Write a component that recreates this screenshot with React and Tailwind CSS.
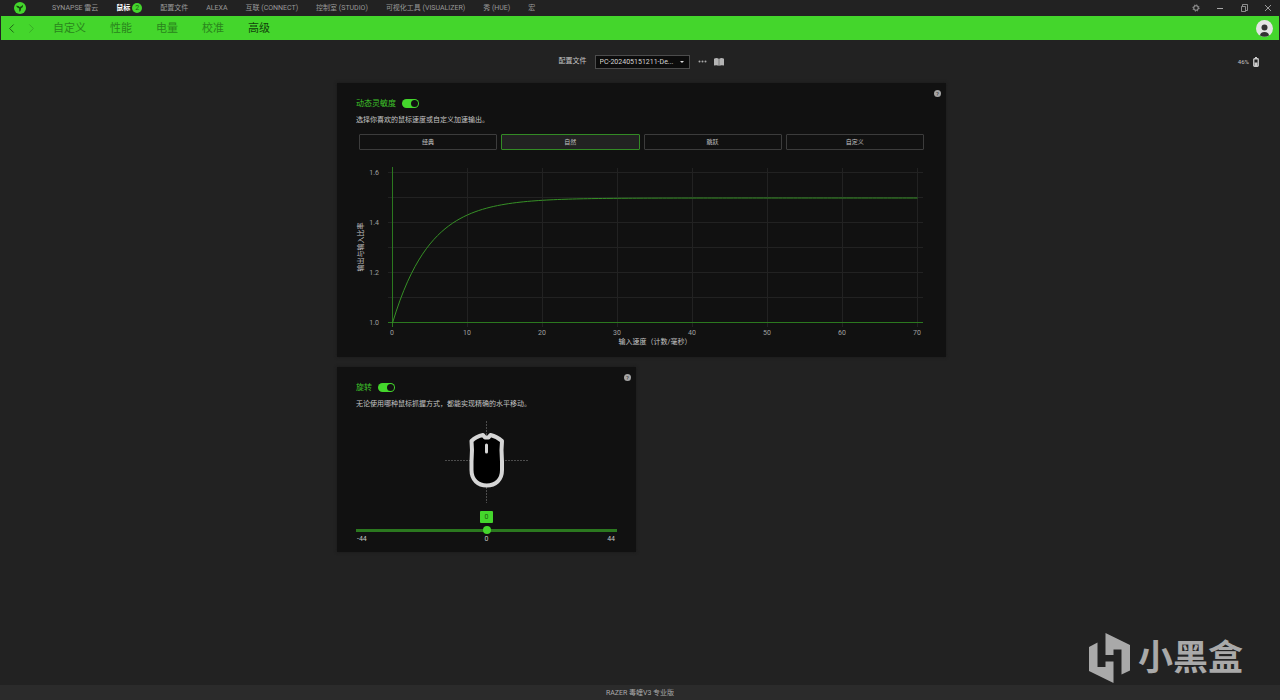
import React, { useState } from 'react';
import { ChevronLeft, ChevronRight } from 'lucide-react';

const MODULES = [
  { name: 'SYNAPSE 雷云' },
  { name: '鼠标', badge: 2 },
  { name: '配置文件' },
  { name: 'ALEXA' },
  { name: '互联 (CONNECT)' },
  { name: '控制室 (STUDIO)' },
  { name: '可视化工具 (VISUALIZER)' },
  { name: '秀 (HUE)' },
  { name: '宏' },
];

const TABS = ['自定义', '性能', '电量', '校准', '高级'];
const CURVES = ['经典', '自然', '跳跃', '自定义'];

// chart geometry
const X0 = 55;
const Y0 = 173;
const X_STEP = 75;
const Y_STEP = 25;

const curvePoints = Array.from({ length: 141 }, (_, i) => {
  const speed = i / 2;
  const ratio = 0.5 * (1 - Math.exp(-speed / 5));
  return `${X0 + 0.5 + speed * 7.5},${(Y0 - ratio * 250).toFixed(2)}`;
}).join(' ');

const Logo = () => (
  <svg viewBox="0 0 12 12" className="w-3 h-3" aria-hidden="true">
    <circle cx="6" cy="6" r="6" fill="#44d62c" />
    <path d="M2 3.8 Q4.4 3.4 5.6 5 Q7.4 4.6 9 2.8 Q9.6 5 7 6.6 Q7.2 8.6 5.8 10 Q4.8 8.2 5.2 6.6 Q3 5.8 2 3.8Z" fill="#164a0e" />
  </svg>
);

const WindowIcon = ({ label, children }) => (
  <button aria-label={label}>
    <svg viewBox="0 0 8 8" className="w-2 h-2" fill="none" stroke="#a8a8a8">
      {children}
    </svg>
  </button>
);

const Help = () => (
  <button aria-label="帮助" className="w-[7px] h-[7px] mt-px rounded-full bg-[#a5a5a5] text-[#333] text-[6px] leading-[7px] text-center">
    ?
  </button>
);

const Toggle = ({ label }) => {
  const [on, setOn] = useState(true);
  return (
    <label className="flex items-center gap-[6px] h-3 mt-2 text-[8px] leading-3 text-[#3fc42a]">
      <span className="pt-px">{label}</span>
      <input
        type="checkbox"
        checked={on}
        onChange={() => setOn(!on)}
        className="appearance-none flex items-center w-[17px] h-[9px] p-px rounded-full bg-[#555] checked:bg-[#44d62c] before:content-[''] before:w-[7px] before:h-[7px] before:rounded-full before:bg-[#111] checked:before:ml-auto"
      />
    </label>
  );
};

const CardHeader = ({ label, text }) => (
  <>
    <div className="flex items-start justify-between pl-[19px] pr-[5px]">
      <Toggle label={label} />
      <Help />
    </div>
    <p className="mt-[5px] pl-[19px] text-[7px] leading-[13px] text-[#c4c4c4]">{text}</p>
  </>
);

const Chart = () => (
  <svg viewBox="0 0 609 200" className="block w-full" role="img" aria-label="输出与输入比率">
    <g stroke="#222" shapeRendering="crispEdges">
      {[1, 2, 3, 4, 5, 6].map(n => (
        <line key={n} x1={X0 - 4} x2="586" y1={Y0 - n * Y_STEP - 0.5} y2={Y0 - n * Y_STEP - 0.5} />
      ))}
      {[1, 2, 3, 4, 5, 6, 7].map(n => (
        <line key={n} x1={X0 + n * X_STEP + 0.5} x2={X0 + n * X_STEP + 0.5} y1="18" y2="177" />
      ))}
    </g>
    <g stroke="#2b781f" shapeRendering="crispEdges">
      <line x1={X0 + 0.5} x2={X0 + 0.5} y1="17" y2="177" />
      <line x1={X0 - 4} x2="586" y1={Y0 - 0.5} y2={Y0 - 0.5} />
    </g>
    <polyline points={curvePoints} fill="none" stroke="#369026" />
    <g fill="#a0a0a0" fontSize="7">
      {['1.0', '1.2', '1.4', '1.6'].map((v, i) => (
        <text key={v} x="42" y={Y0 + 2 - i * 50} textAnchor="end">{v}</text>
      ))}
      {[0, 10, 20, 30, 40, 50, 60, 70].map((v, i) => (
        <text key={v} x={X0 + i * X_STEP} y="185" textAnchor="middle">{v}</text>
      ))}
    </g>
    <g fill="#c4c4c4" fontSize="7" textAnchor="middle">
      <text x="318" y="194">输入速度（计数/毫秒）</text>
      <text x="0" y="0" transform="translate(26 97) rotate(-90)">输出与输入比率</text>
    </g>
  </svg>
);

const MouseDrawing = () => (
  <svg viewBox="0 0 84 84" className="block w-[84px] h-[84px] mx-auto mt-2" aria-hidden="true">
    <g stroke="#4c4c4c" strokeDasharray="2 1" shapeRendering="crispEdges">
      <line x1="0" x2="84" y1="41.5" y2="41.5" />
      <line x1="41.5" x2="41.5" y1="2" y2="84" />
    </g>
    <path
      d="M26.5 22 Q31 17.5 38 16 L40 18.5 H43.5 L45.5 16 Q52 17.5 57 22 C56 31 56.5 36 57 42 V51 C57 61 50.5 66.5 41.75 66.5 C33 66.5 26.5 61 26.5 51 V42 C27 36 27.5 31 26.5 22Z"
      fill="#000"
      stroke="#d6d6d6"
      strokeWidth="4"
      strokeLinejoin="round"
    />
    <path d="M41.5 26 V33" stroke="#d6d6d6" strokeWidth="3" strokeLinecap="round" />
  </svg>
);

const Rotation = () => {
  const [angle, setAngle] = useState(0);
  return (
    <div className="px-[19px]">
      <output htmlFor="angle" className="block w-[13px] h-3 mx-auto mt-2 rounded-[1px] bg-[#44d62c] text-[#1d5c13] text-[7px] leading-3 text-center">
        {angle}
      </output>
      <input
        id="angle"
        type="range"
        min="-44"
        max="44"
        value={angle}
        onChange={e => setAngle(Number(e.target.value))}
        aria-label="旋转角度"
        className="appearance-none block w-full h-2 mt-[3px] bg-transparent [&::-webkit-slider-runnable-track]:h-[3px] [&::-webkit-slider-runnable-track]:bg-[#2b781f] [&::-webkit-slider-thumb]:appearance-none [&::-webkit-slider-thumb]:w-2 [&::-webkit-slider-thumb]:h-2 [&::-webkit-slider-thumb]:mt-[-3px] [&::-webkit-slider-thumb]:rounded-full [&::-webkit-slider-thumb]:bg-[#44d62c]"
      />
      <div className="grid grid-cols-3 text-[7px] leading-[10px] text-[#c4c4c4]">
        <span className="pl-px">-44</span>
        <span className="text-center">0</span>
        <span className="pr-[2px] text-right">44</span>
      </div>
    </div>
  );
};

const App = () => {
  const [tab, setTab] = useState('高级');
  const [curve, setCurve] = useState(1);

  return (
    <div className="relative flex flex-col min-h-screen bg-[#222] text-[#c4c4c4] font-['Roboto','Noto_Sans_CJK_SC',sans-serif]">
      <header className="flex items-center justify-between h-4 pl-[14px] pr-2 text-[7px] leading-4 text-[#999]">
        <div className="flex items-center gap-[26px]">
          <Logo />
          <nav className="flex items-center gap-[18px]">
            {MODULES.map(m => (
              <a key={m.name} href="#" className={m.badge ? 'flex items-center gap-[2px] font-bold text-white' : 'whitespace-nowrap'}>
                {m.name}
                {m.badge && (
                  <span className="w-[10px] h-[10px] rounded-full bg-[#44d62c] text-[#1d5c13] text-[7px] leading-[10px] font-normal text-center">
                    {m.badge}
                  </span>
                )}
              </a>
            ))}
          </nav>
        </div>
        <div className="flex items-center gap-4">
          <WindowIcon label="设置">
            <circle cx="4" cy="4" r="2.3" />
            <circle cx="4" cy="4" r="3.1" strokeDasharray="1.2 1.23" strokeWidth=".9" />
          </WindowIcon>
          <WindowIcon label="最小化">
            <path d="M1 4.5H7" />
          </WindowIcon>
          <WindowIcon label="还原">
            <path d="M1.5 2.5H5.5V7.5H1.5ZM2.5 2V.5H7.5V6.5H6" strokeWidth=".8" />
          </WindowIcon>
          <WindowIcon label="关闭">
            <path d="M1 1L7 7M7 1L1 7" strokeWidth=".9" />
          </WindowIcon>
        </div>
      </header>

      <div className="flex items-center justify-between h-6 ml-px mr-px pr-[6px] bg-[#44d62c]">
        <div className="flex items-center">
          <button aria-label="后退" className="flex justify-center w-5 text-[#1d5c13]"><ChevronLeft size={15} strokeWidth={1.5} /></button>
          <button aria-label="前进" className="flex justify-center w-5 text-[#37a825]"><ChevronRight size={15} strokeWidth={1.5} /></button>
          <nav className="flex gap-6 pt-[2px] pl-3 text-[11px] leading-[22px]">
            {TABS.map(t => (
              <button key={t} onClick={() => setTab(t)} className={t === tab ? 'text-[#123f0b]' : 'text-[#2a851c]'}>
                {t}
              </button>
            ))}
          </nav>
        </div>
        <button aria-label="账户">
          <svg viewBox="0 0 17 17" className="w-[17px] h-[17px]">
            <circle cx="8.5" cy="8.5" r="8.5" fill="#e4e4e4" />
            <circle cx="8.5" cy="7.5" r="3" fill="#333" />
            <path d="M4 15.5 Q4.2 12 8.5 12 Q12.8 12 13 15.5 Q8.5 18 4 15.5Z" fill="#333" />
          </svg>
        </button>
      </div>

      <main className="flex-1">
        <div className="grid grid-cols-[1fr_auto_1fr] items-center h-[43px] pr-[21px] pl-[23px] text-[7px]">
          <div />
          <div className="flex items-center">
            <label htmlFor="profile" className="mr-2">配置文件</label>
            <div className="relative">
              <select id="profile" className="appearance-none block w-[95px] h-[14px] pl-1 border border-[#4c4c4c] bg-[#0c0c0c] text-[7px] leading-3 text-[#d4d4d4]">
                <option>PC-202405151211-De...</option>
              </select>
              <svg viewBox="0 0 4 2" className="absolute right-[6px] top-[6px] w-1 h-[2px] pointer-events-none" aria-hidden="true">
                <path d="M0 0H4L2 2Z" fill="#ddd" />
              </svg>
            </div>
            <button aria-label="更多" className="ml-2">
              <svg viewBox="0 0 9 3" className="w-[9px] h-[3px]" fill="#aaa">
                <circle cx="1.5" cy="1.5" r="1" />
                <circle cx="4.5" cy="1.5" r="1" />
                <circle cx="7.5" cy="1.5" r="1" />
              </svg>
            </button>
            <button aria-label="指南" className="ml-[7px]">
              <svg viewBox="0 0 10 8" className="w-[10px] h-2" fill="#b4b4b4">
                <path d="M0 .7 Q2.5-.5 4.8.7V7.8Q2.5 6.6 0 7.6Z" />
                <path d="M10 .7 Q7.5-.5 5.2.7V7.8Q7.5 6.6 10 7.6Z" />
              </svg>
            </button>
          </div>
          <div className="flex items-center justify-end gap-1 text-[6px]">
            46%
            <svg viewBox="0 0 6 10" className="w-[6px] h-[10px]" aria-hidden="true">
              <rect x="2" width="2" height="1.5" fill="#ccc" />
              <rect x=".75" y="1.75" width="4.5" height="7.5" rx=".8" fill="#222" stroke="#ccc" strokeWidth="1.3" />
              <rect x="1.5" y="5.5" width="3" height="3.5" fill="#ccc" />
            </svg>
          </div>
        </div>

        <div className="pl-[3px]">
          <div className="flex flex-col gap-[10px] w-full max-w-[609px] mx-auto">
            <section className="pt-[6px] pb-[7px] bg-[#111] shadow-[0_0_3px_#181818]">
              <CardHeader label="动态灵敏度" text="选择你喜欢的鼠标速度或自定义加速输出。" />
              <div className="grid grid-cols-4 gap-1 mt-[7px] px-[22px]">
                {CURVES.map((name, i) => (
                  <button
                    key={name}
                    onClick={() => setCurve(i)}
                    className={`h-4 rounded-[1px] border text-[6px] leading-[14px] ${
                      i === curve ? 'border-[#338a25] bg-[#222]' : 'border-[#3c3c3c] bg-[#111]'
                    }`}
                  >
                    {name}
                  </button>
                ))}
              </div>
              <Chart />
            </section>

            <section className="w-full max-w-[299px] pt-[6px] pb-2 bg-[#111] shadow-[0_0_3px_#181818]">
              <CardHeader label="旋转" text="无论使用哪种鼠标抓握方式，都能实现精确的水平移动。" />
              <MouseDrawing />
              <Rotation />
            </section>
          </div>
        </div>
      </main>

      <footer className="h-[15px] bg-[#2b2b2b] text-[7px] leading-4 text-center text-[#aaa]">RAZER 毒蝰V3 专业版</footer>

      <div className="absolute right-[37px] bottom-[17px] flex items-center gap-2 text-[#a9a9a9] pointer-events-none">
        <svg viewBox="0 0 41 50" className="w-[41px] h-[50px]" fill="currentColor" aria-hidden="true">
          <path d="M0 14L8.5 9.5V34H16.5V28.5H24.5V50L0 38Z" />
          <path d="M16.5 0L41 12V37.5L32.5 41.5V16.5H24.5V22H16.5Z" />
        </svg>
        <span className="pt-[2px] text-[35px] leading-[48px] font-bold">小黑盒</span>
      </div>
    </div>
  );
};

export default App;
